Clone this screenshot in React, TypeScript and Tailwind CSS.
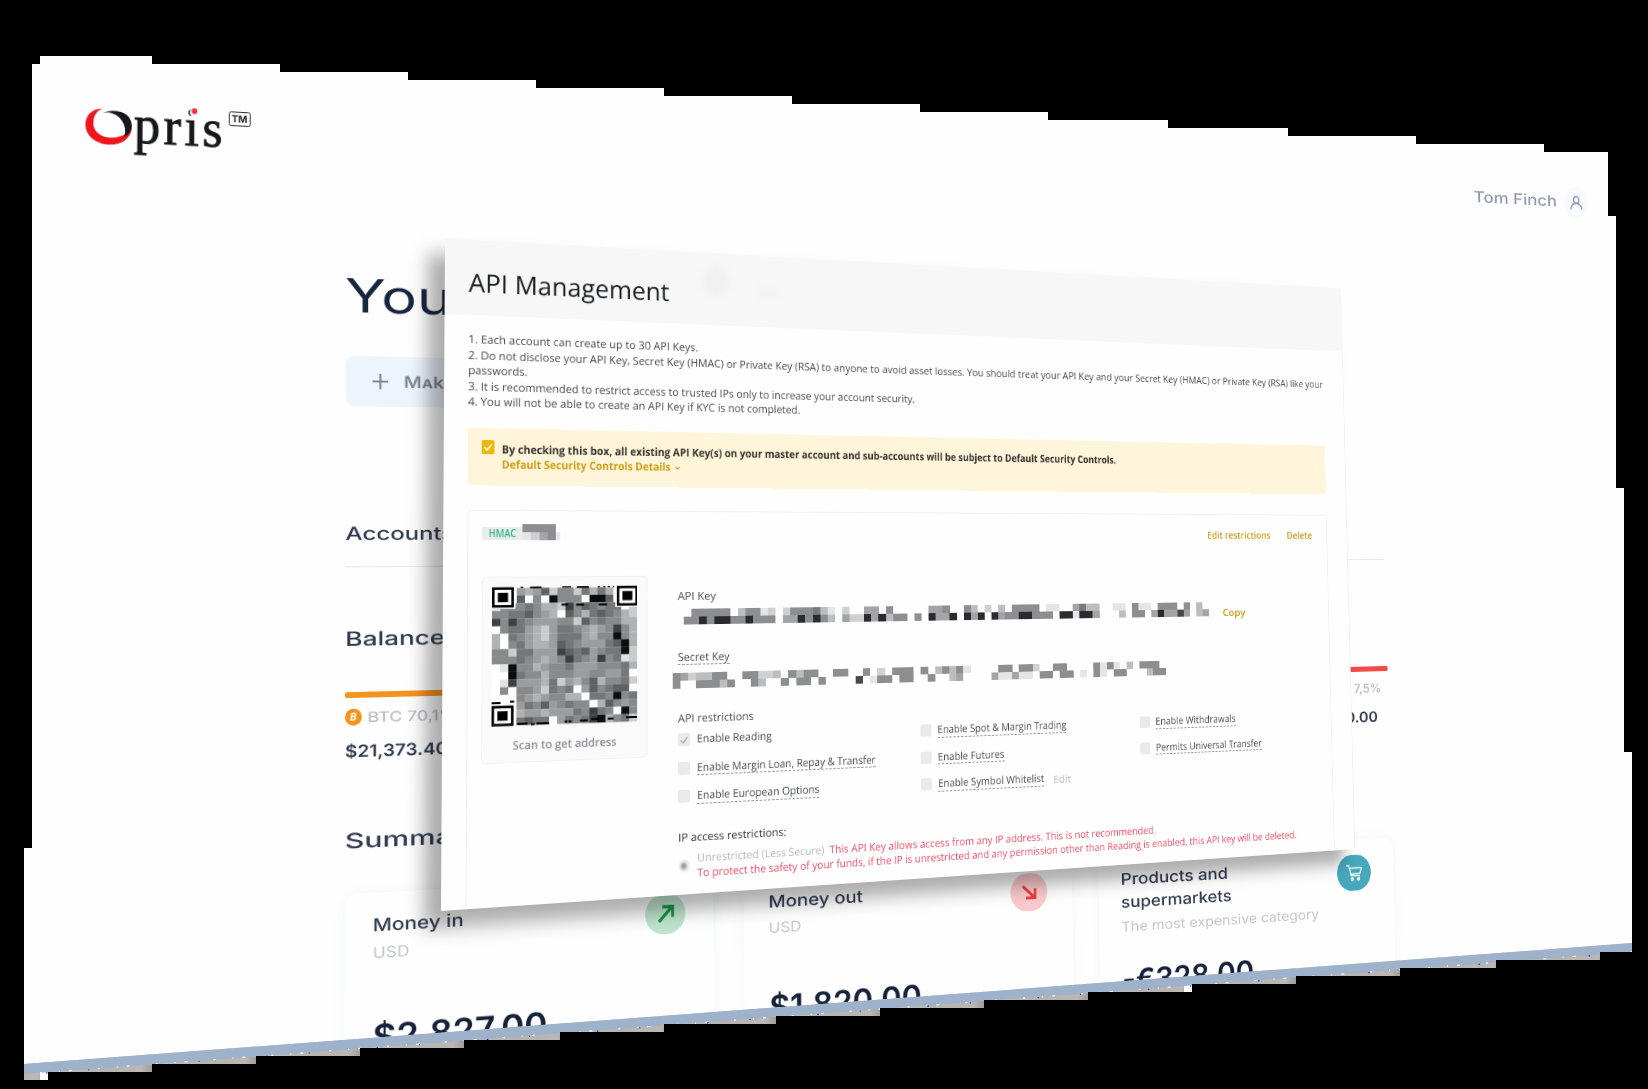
import { useLayoutEffect, useRef, useState, type ReactNode } from "react";

type Quad = [number, number, number, number, number, number, number, number];

/** CSS matrix3d that maps a w×h box onto a quad given as TL, TR, BR, BL. */
function project(q: Quad, w: number, h: number) {
  const [x0, y0, x1, y1, x2, y2, x3, y3] = q;
  const dx1 = x1 - x2, dx2 = x3 - x2, dx3 = x0 - x1 + x2 - x3;
  const dy1 = y1 - y2, dy2 = y3 - y2, dy3 = y0 - y1 + y2 - y3;
  const den = dx1 * dy2 - dx2 * dy1;
  const g = (dx3 * dy2 - dx2 * dy3) / den;
  const k = (dx1 * dy3 - dx3 * dy1) / den;
  const m = [
    (x1 - x0 + g * x1) / w, (y1 - y0 + g * y1) / w, 0, g / w,
    (x3 - x0 + k * x3) / h, (y3 - y0 + k * y3) / h, 0, k / h,
    0, 0, 1, 0,
    x0, y0, 0, 1,
  ];
  return `matrix3d(${m.map((v) => v.toFixed(10)).join(",")})`;
}

/** One line of text, stretched horizontally to an exact width. */
function Fit({ w, className = "", children }: { w: number; className?: string; children: ReactNode }) {
  const ref = useRef<HTMLSpanElement>(null);
  const [scale, setScale] = useState(1);
  useLayoutEffect(() => {
    if (ref.current) setScale(w / ref.current.offsetWidth);
  }, [w]);
  return (
    <span className={`block shrink-0 whitespace-nowrap text-left ${className}`} style={{ width: w }}>
      <span ref={ref} className="inline-block origin-left align-top" style={{ transform: `scaleX(${scale})` }}>
        {children}
      </span>
    </span>
  );
}

const SHADES = ["#ffffff", "#e3e3e4", "#cbcccd", "#b1b2b3", "#9c9d9e", "#888a8b", "#757677", "#5f6061", "#3e3f41", "#0c0d0e"];
const KEY_SHADES = ["#ffffff", "#e4e5e6", "#cfd0d2", "#bcbdbf", "#a3a4a6", "#8c8e90", "#77797b", "#5c5d5e", "#46484a", "#2a2b2e"];

function Mosaic({ rows, className }: { rows: string[]; className: string }) {
  return (
    <svg className={className} viewBox={`0 0 ${rows[0].length} ${rows.length}`} preserveAspectRatio="none" shapeRendering="crispEdges">
      {rows.map((row, y) =>
        row.split("").map((c, x) =>
          c === "." ? null : <rect key={`${x}-${y}`} x={x} y={y} width="1.02" height="1.02" fill={KEY_SHADES[Number(c)]} />
        )
      )}
    </svg>
  );
}

const API_KEY = [
  ".55555.35512." + "2555631" + "." + "2..44.5.." + "..." + "445." + "." + "53.2." + "3.5555.1" + "1" + "..4633" + ".." + "11" + "." + "511" + "." + "555" + "." + "5" + "." + "3.",
  "559599559555." + "4495953" + "." + "422949355" + "." + "5" + "." + "9449" + "." + "949.9" + "45599555" + "." + "991994" + "..." + "3" + "." + "55" + "." + "494484" + "." + "34",
];
const SECRET_KEY = [
  "5423355..55223.5355..55..5.2.555.5.35351....55.552..55....5151.3.555.",
  "5..55535..53..5.55.5....8.155.55..5..34....411411.55.55.1.51.55...355",
];

const QR = [
  "000434725526363000",
  "000705095550997000",
  "155565332857656602",
  "556675430753676532",
  "858654445527565533",
  "056643246654345853",
  "306543246664355953",
  "305643347654446793",
  "552664448767456692",
  "555654345865485612",
  "019553455644455563",
  "009655355544554460",
  "018444362435735562",
  "050554265604756770",
  "000543455330665956",
  "000465745655037545",
  "000344344465865095",
  "000676604656893562",
];

function Finder({ x, y }: { x: number; y: number }) {
  return (
    <g>
      <rect x={x - 5} y={y - 4} width="74" height="68" fill="#fafafa" />
      <rect x={x + 3.5} y={y + 3.5} width="57" height="53" fill="#fff" stroke="#000" strokeWidth="7.5" />
      <rect x={x + 17} y={y + 16} width="30" height="28" fill="#000" />
    </g>
  );
}

function QrCode() {
  return (
    <svg className="-ml-[0.5px] h-[137px] w-[162px]" viewBox="0 0 436 415" preserveAspectRatio="none">
      {QR.map((row, y) =>
        row.split("").map((c, x) => (
          <rect key={`${x}-${y}`} x={x * 24.2} y={4 + y * 22.7} width="24.8" height="23.2" fill={SHADES[Number(c)]} />
        ))
      )}
      <path
        d="M84 1h8M112 2h34M208 1h26M252 2h36M316 1h6M332 1h6M346 1h6M362 1h4M206 55h20M250 56h24M318 56h26M0 345h26M54 342h12M76 409h30M116 411h10M132 410h38M216 407h8M228 407h8M262 405h24M296 402h22M346 402h18M402 400h34"
        stroke="#000"
        strokeWidth="6"
      />
      <Finder x={0} y={2} />
      <Finder x={374} y={0} />
      <Finder x={0} y={354} />
    </svg>
  );
}

function Box({ checked }: { checked?: boolean }) {
  return (
    <span className="mt-[2px] flex h-[13px] w-[14.5px] shrink-0 items-center justify-center rounded-[2px] bg-[#e9ebeb]">
      {checked && (
        <svg className="h-2.5 w-2.5" viewBox="0 0 10 10" fill="none" stroke="#a9acb0" strokeWidth="1.5">
          <path d="M1 5.2 4 8 9 2" />
        </svg>
      )}
    </span>
  );
}

type Perm = { label: string; w: number; checked?: boolean; edit?: boolean };

const PERMISSIONS: Perm[][] = [
  [
    { label: "Enable Reading", w: 89, checked: true },
    { label: "Enable Margin Loan, Repay & Transfer", w: 216.4 },
    { label: "Enable European Options", w: 146 },
  ],
  [
    { label: "Enable Spot & Margin Trading", w: 169.5 },
    { label: "Enable Futures", w: 87 },
    { label: "Enable Symbol Whitelist", w: 139, edit: true },
  ],
  [
    { label: "Enable Withdrawals", w: 115 },
    { label: "Permits Universal Transfer", w: 152.3 },
  ],
];

function Permission({ p }: { p: Perm }) {
  return (
    <div className="flex h-[28.5px] items-start">
      <Box checked={p.checked} />
      <Fit w={p.w} className={p.checked ? "ml-[7.5px]" : "ml-[7.5px] border-b border-dashed border-[#8f9296]"}>
        {p.label}
      </Fit>
      {p.edit && <Fit w={24.3} className="ml-[12px] mt-[1.5px] text-[#b3b6ba]">Edit</Fit>}
    </div>
  );
}

function ApiModal() {
  return (
    <section className="flex h-[656px] w-[1160px] flex-col bg-[#fefefe] font-['Open_Sans','Noto_Sans',sans-serif] text-[11.3px] font-medium leading-[15.4px] text-[#46484c] shadow-[-18px_16px_18px_rgba(0,0,0,0.32)]">
      <header className="relative h-[74.5px] shrink-0 bg-[#f7f7f7] pl-[26px] pt-[26px]">
        <Fit w={227} className="text-[25.5px] font-normal leading-8 text-[#1b1e22]">API Management</Fit>
        <span className="absolute left-[292px] top-[14px] h-[30px] w-[32px] rounded-full bg-[#f1f1f2] blur-[3px]" />
        <span className="absolute left-[360px] top-[34px] h-[10px] w-[22px] rounded-full bg-[#f3f3f4] blur-[3px]" />
      </header>

      <div className="flex grow flex-col border-r border-[#f0f0f1] pl-[26px] pr-[30px] pt-[16.8px]">
        <Fit w={260.5}>1. Each account can create up to 30 API Keys.</Fit>
        <Fit w={1102}>
          2. Do not disclose your API Key, Secret Key (HMAC) or Private Key (RSA) to anyone to avoid asset losses. You should treat your API Key and your Secret Key (HMAC) or Private Key (RSA) like your
        </Fit>
        <Fit w={64.5}>passwords.</Fit>
        <Fit w={528}>3. It is recommended to restrict access to trusted IPs only to increase your account security.</Fit>
        <Fit w={383.5}>4. You will not be able to create an API Key if KYC is not completed.</Fit>

        <div className="mt-[19px] flex h-[56.3px] shrink-0 items-start rounded-[2px] bg-[#fef5da] pl-[14.5px] pt-[12px]">
          <span className="flex h-[13.4px] w-[14.4px] shrink-0 items-center justify-center rounded-[2px] bg-[#ecb80d]">
            <svg className="h-2.5 w-2.5" viewBox="0 0 10 10" fill="none" stroke="#fff" strokeWidth="1.6">
              <path d="M1 5 3.8 7.8 9 2.2" />
            </svg>
          </span>
          <div className="ml-[8.2px] mt-[0.6px]">
            <Fit w={760} className="font-bold text-[#33312e]">
              By checking this box, all existing API Key(s) on your master account and sub-accounts will be subject to Default Security Controls.
            </Fit>
            <div className="flex items-center text-[#cf9a0c]">
              <Fit w={191} className="font-bold">Default Security Controls Details</Fit>
              <svg className="ml-[5px] mt-0.5 h-1.5 w-1.5" viewBox="0 0 6 6" fill="none" stroke="currentColor" strokeWidth="1.2">
                <path d="M.6 1.8 3 4.2 5.4 1.8" />
              </svg>
            </div>
          </div>
        </div>

        <div className="mt-[24px] flex grow flex-col rounded-t-[4px] border border-b-0 border-[#eff0f1] pl-[14.5px] pr-[22.5px] pt-[13px]">
          <div className="flex h-[16px] items-end">
            <span className="flex h-[13px] w-[44px] items-center bg-[#e8edeb] pl-[7.5px] text-[#37b68c]">
              <Fit w={30.6} className="text-[10px] font-semibold leading-[13px]">HMAC</Fit>
            </span>
            <Mosaic rows={["5555", "1245"]} className="h-[16px] w-[37px]" />
            <span className="h-2 w-[5px] bg-[#e6e8e9]" />
            <div className="-mb-[1.5px] ml-auto flex gap-[24px] font-semibold text-[#cb9c1a]">
              <Fit w={92.5}>Edit restrictions</Fit>
              <Fit w={37.7}>Delete</Fit>
            </div>
          </div>

          <div className="mt-[36.5px] flex items-start">
            <div className="flex h-[183px] w-[185px] shrink-0 flex-col items-center rounded-[4px] border border-[#f3f3f4] bg-[#fafafa] pt-[9px]">
              <QrCode />
              <Fit w={115.7} className="mt-[10.8px] text-[11.5px] font-semibold text-[#898b8f]">Scan to get address</Fit>
            </div>

            <div className="ml-[35px] grow pt-[12.5px]">
              <Fit w={45}>API Key</Fit>
              <div className="mt-[6px] flex h-[16px] items-end">
                <Mosaic rows={API_KEY} className="ml-[7.3px] h-[16px] w-[682px] shrink-0" />
                <Fit w={33.6} className="-mb-[3.5px] ml-[20.5px] text-[11.5px] font-semibold text-[#cd9a10]">Copy</Fit>
              </div>
              <Fit w={61} className="mt-[24.5px] border-b border-dashed border-[#8f9296]">Secret Key</Fit>
              <Mosaic rows={SECRET_KEY} className="-ml-[6px] mt-[8.2px] h-[15.5px] w-[632px]" />

              <Fit w={89} className="mt-[22px]">API restrictions</Fit>
              <div className="mt-[6.3px] grid h-[85.5px] grid-cols-[295px_293px_270px]">
                {PERMISSIONS.map((column, i) => (
                  <div key={i}>
                    {column.map((p) => <Permission key={p.label} p={p} />)}
                  </div>
                ))}
              </div>

              <Fit w={127.5} className="mt-[12.7px] text-[#2f3135]">IP access restrictions:</Fit>
              <div className="mt-[5.8px] flex items-center">
                <span className="flex h-[13px] w-[14px] items-center justify-center rounded-full bg-[#f3f3f4]">
                  <span className="h-[7px] w-[7px] rounded-full bg-[#9c9ea1] blur-[1px]" />
                </span>
                <div className="ml-[8px] text-[#ee4a62]">
                  <div className="flex gap-[6.5px]">
                    <Fit w={151.6} className="text-[#b4b6ba]">Unrestricted (Less Secure)</Fit>
                    <Fit w={428}>This API Key allows access from any IP address. This is not recommended.</Fit>
                  </div>
                  <Fit w={788}>
                    To protect the safety of your funds, if the IP is unrestricted and any permission other than Reading is enabled, this API key will be deleted.
                  </Fit>
                </div>
              </div>
            </div>
          </div>
        </div>
      </div>
    </section>
  );
}

function Logo() {
  return (
    <svg className="h-[70px] w-[180px] overflow-visible" viewBox="0 0 180 70">
      <g transform="translate(1 0.5)">
        <path d="M17 0C6 1 0 8 0 17c0 11 10 19 24 19 12 0 22-7 23-18-5 7-13 11-22 11C14 29 7 22 8 14 8 8 11 3 17 0Z" fill="#f0141c" />
        <path d="M17.5 5C24 0 47-1 47 17c-1 5-4 9-8 10.5C43 19 37 6 26 4.2 22.5 3.5 20 4 17.5 5Z" fill="#16181b" />
      </g>
      <text
        x="50"
        y="32.5"
        textLength="91.5"
        lengthAdjust="spacing"
        strokeWidth="0.9"
        className="fill-[#16181b] stroke-[#16181b] font-['Liberation_Serif',serif] text-[54px]"
      >
        pris
      </text>
      <circle cx="112.5" cy="-0.5" r="5" fill="#fefefe" />
      <circle cx="112.3" cy="-2" r="2.9" fill="#f0303a" />
    </svg>
  );
}

function PersonIcon() {
  return (
    <svg className="h-[18px] w-5" viewBox="0 0 20 18" fill="none" stroke="currentColor" strokeWidth="2.1">
      <circle cx="10" cy="5.5" r="4.3" />
      <path d="M1.2 17.5C1.5 13 5 9.9 10 9.9s8.5 3.1 8.8 7.6" />
    </svg>
  );
}

function SummaryCard({ icon, amount, children }: { icon: ReactNode; amount: ReactNode; children: ReactNode }) {
  return (
    <article className="h-[200px] w-[414px] shrink-0 rounded-[14px] bg-[#fefefe] pl-[30px] pt-[20px] shadow-[0_0_14px_rgba(40,70,100,0.05)]">
      <div className="flex h-[100px] justify-between pr-[33px]">
        <div>{children}</div>
        <div className="-mt-[1.5px]">{icon}</div>
      </div>
      {amount}
    </article>
  );
}

function Dashboard() {
  return (
    <div className="h-[984px] w-[2000px] overflow-hidden font-['Inter','Noto_Sans',sans-serif] text-[#303b50]">
      <header className="flex h-[150px] items-start pl-[49.4px]">
        <div className="mt-[48px] flex items-start">
          <Logo />
        </div>
        <span className="-ml-[32.5px] mt-[44px] flex h-[15px] w-[23.5px] items-center justify-center rounded-[2.5px] border-[1.3px] border-[#2a2c2f] text-[#222]">
          <Fit w={16.5} className="text-[10px] font-bold leading-[13px]">TM</Fit>
        </span>
        <div className="ml-auto mr-[41px] mt-[42px] flex items-center text-[#8f9ab3]">
          <Fit w={130} className="text-[19px] font-medium leading-[40px]">Tom Finch</Fit>
          <span className="ml-[12.5px] flex h-[40px] w-[38px] items-center justify-center rounded-full bg-[#f7fafe]">
            <PersonIcon />
          </span>
        </div>
      </header>

      <main className="flex flex-col pl-[322px]">
        <Fit w={117} className="-ml-[1px] mt-[49.5px] text-[48px] font-normal leading-[56px] text-[#17263f]">You</Fit>
        <button className="mt-[34.5px] flex h-[51.5px] w-[300px] items-center rounded-[9px] bg-[#ecf4fd] pl-[29px] text-[#7e8896]">
          <svg className="h-[16px] w-[17px]" viewBox="0 0 17 16" stroke="currentColor" strokeWidth="2.2">
            <path d="M8.5 0v16M0 8h17" />
          </svg>
          <Fit w={57} className="ml-[17px] pt-px text-[17px] font-semibold [font-variant:small-caps]">Make</Fit>
        </button>

        <Fit w={118.5} className="mt-[117px] text-[18.5px] font-medium leading-[26px]">Accounts</Fit>
        <div className="mt-[21.5px] h-px w-[1309px] bg-[#e3e7ec]" />

        <Fit w={108} className="mt-[60px] text-[20px] font-medium leading-[26px]">Balance</Fit>
        <div className="mt-[40.5px] flex h-[6px] w-[1311px] overflow-hidden rounded-[2px]">
          <div className="grow bg-[#f6921e]" />
          <div className="w-[100px] bg-[#f24a45]" />
        </div>
        <div className="mt-[10px] flex h-5 w-[1301px] items-center text-[#b7bcc6]">
          <span className="flex h-[17px] w-[18px] items-center justify-center rounded-full bg-[#f6921e] text-[11px] font-bold italic leading-none text-white">
            B
          </span>
          <Fit w={97} className="ml-[6px] text-[14.5px] font-medium leading-5">BTC 70,1%</Fit>
          <Fit w={40} className="ml-auto text-[14.5px] font-semibold leading-5">7,5%</Fit>
        </div>
        <div className="mt-[12.5px] flex h-6 w-[1295px] justify-between text-[17px] font-semibold leading-6">
          <Fit w={112}>$21,373.40</Fit>
          <Fit w={47}>0.00</Fit>
        </div>

        <Fit w={148} className="mt-[65px] text-[21px] font-medium leading-7">Summary</Fit>

        <div className="mt-[38.5px] flex gap-[35.5px]">
          <SummaryCard
            icon={
              <span className="flex h-[42px] w-[47px] items-center justify-center rounded-full bg-[#bfe5cd]">
                <svg className="h-5 w-6" viewBox="0 0 24 20" fill="none" stroke="#129447" strokeWidth="3.4">
                  <path d="M4 18 19 3M8 2.5h12v11" />
                </svg>
              </span>
            }
            amount={<Fit w={191.5} className="text-[35px] font-semibold leading-[50px] text-[#152239]">$2,827.00</Fit>}
          >
            <Fit w={99} className="text-[18px] font-medium leading-[26px]">Money in</Fit>
            <Fit w={40} className="mt-[2px] text-[15.5px] leading-[26px] text-[#bfc3cc]">USD</Fit>
          </SummaryCard>
          <SummaryCard
            icon={
              <span className="flex h-[42px] w-[48px] items-center justify-center rounded-full bg-[#fbc9cb]">
                <svg className="h-4 w-5" viewBox="0 0 20 16" fill="none" stroke="#ec3a3c" strokeWidth="3.2">
                  <path d="M2 1 16 13M18 4v10.4H6" />
                </svg>
              </span>
            }
            amount={<Fit w={188.5} className="text-[35px] font-semibold leading-[50px] text-[#152239]">$1,820.00</Fit>}
          >
            <Fit w={115} className="text-[18px] font-medium leading-[26px]">Money out</Fit>
            <Fit w={40} className="mt-[2px] text-[15.5px] leading-[26px] text-[#bfc3cc]">USD</Fit>
          </SummaryCard>
          <SummaryCard
            icon={
              <span className="flex h-[42px] w-[49px] items-center justify-center rounded-full bg-[#45a8bd]">
                <svg className="h-5 w-[25px]" viewBox="0 0 25 20" fill="none" stroke="#fff" strokeWidth="1.7">
                  <path d="M1 1.5h4l3.5 12h12.5M6 4.5h17.5l-2.5 6.5-13 .5" />
                  <circle cx="10" cy="17.5" r="1.4" />
                  <circle cx="19" cy="17.5" r="1.4" />
                </svg>
              </span>
            }
            amount={<Fit w={181} className="text-[35px] font-semibold leading-[50px] text-[#152239]">-€328.00</Fit>}
          >
            <Fit w={147} className="-mt-[1.5px] text-[18px] font-medium leading-[25.5px]">Products and</Fit>
            <Fit w={152} className="text-[18px] font-medium leading-[25.5px]">supermarkets</Fit>
            <Fit w={275} className="mt-[3px] text-[15.5px] leading-[26px] text-[#bfc3cc]">The most expensive category</Fit>
          </SummaryCard>
        </div>
      </main>
    </div>
  );
}

export default function App() {
  return (
    <div className="h-[1089px] w-[1648px] overflow-hidden bg-black">
      <div className="relative h-full w-full bg-[#fefefe] [clip-path:polygon(40px_56px,152px_56px,152px_64px,280px_64px,280px_72px,408px_72px,408px_80px,536px_80px,536px_88px,664px_88px,664px_96px,792px_96px,792px_104px,920px_104px,920px_112px,1048px_112px,1048px_120px,1168px_120px,1168px_128px,1288px_128px,1288px_136px,1416px_136px,1416px_144px,1544px_144px,1544px_152px,1608px_152px,1608px_216px,1616px_216px,1616px_488px,1624px_488px,1624px_752px,1632px_752px,1632px_952px,1600px_952px,1600px_960px,1496px_960px,1496px_968px,1400px_968px,1400px_976px,1296px_976px,1296px_984px,1192px_984px,1192px_992px,1088px_992px,1088px_1000px,984px_1000px,984px_1008px,880px_1008px,880px_1016px,776px_1016px,776px_1024px,664px_1024px,664px_1032px,560px_1032px,560px_1040px,464px_1040px,464px_1048px,360px_1048px,360px_1056px,256px_1056px,256px_1064px,152px_1064px,152px_1072px,48px_1072px,48px_1080px,24px_1080px,24px_848px,32px_848px,32px_64px,40px_64px)]">
        <div
          className="absolute left-0 top-0 origin-top-left"
          style={{ transform: project([36, 56, 1612, 156, 1633, 943, 27, 1064], 2000, 984) }}
        >
          <Dashboard />
        </div>
        <div
          className="absolute left-0 top-0 origin-top-left"
          style={{ transform: project([445, 238.5, 1341, 288.5, 1355, 849, 441, 911], 1160, 656) }}
        >
          <ApiModal />
        </div>
        <svg className="absolute inset-0 h-full w-full" viewBox="0 0 1648 1089">
          <defs>
            <linearGradient id="ledge" gradientUnits="userSpaceOnUse" x1="48" x2="152" y1="0" y2="0" spreadMethod="repeat">
              <stop offset="0" stopColor="#c3c0bd" />
              <stop offset="0.5" stopColor="#b5b2af" />
              <stop offset="0.9" stopColor="#bab7b4" />
              <stop offset="1" stopColor="#a09e9c" />
            </linearGradient>
          </defs>
          <path d="M24 1064 1632 943V1089H24Z" fill="url(#ledge)" />
          <path d="M40 1072h8v8h-8ZM1184 984h8v8h-8Z" fill="#fff" />
          <path d="M24 1064 1632 943V952L24 1074Z" fill="#9fb2cb" />
          <path d="M40 1072.8 1632 952" fill="none" stroke="#fff" strokeWidth="1.2" strokeDasharray="2 17 1 9 3 26" />
          <path d="M46 1073 1632 952.6" fill="none" stroke="#2226d8" strokeWidth="1.2" strokeDasharray="1.5 41 1 67" />
        </svg>
      </div>
    </div>
  );
}
